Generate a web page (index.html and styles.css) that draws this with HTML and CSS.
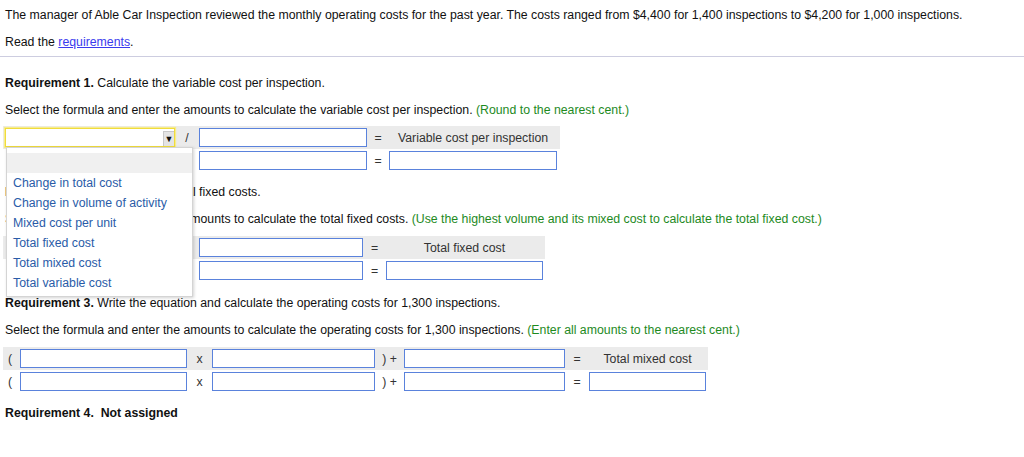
FILE: index.html
```html
<!DOCTYPE html>
<html>
<head>
<meta charset="utf-8">
<link rel="stylesheet" href="styles.css">
</head>
<body>
<div class="page">
  <p class="intro">The manager of Able Car Inspection reviewed the monthly operating costs for the past year. The costs ranged from $4,400 for 1,400 inspections to $4,200 for 1,000 inspections.</p>
  <p class="read">Read the <a class="link" href="#">requirements</a>.</p>
  <hr class="rule">

  <p class="req"><b>Requirement 1.</b> Calculate the variable cost per inspection.</p>
  <p class="instr">Select the formula and enter the amounts to calculate the variable cost per inspection. <span class="hint">(Round to the nearest cent.)</span></p>
  <div class="grid g1">
    <div class="row shaded">
      <div class="cell"><div class="select focus"><span class="arrow">&#9660;</span></div></div>
      <div class="op">/</div>
      <div class="cell"><div class="inp"></div></div>
      <div class="op">=</div>
      <div class="label">Variable cost per inspection</div>
    </div>
    <div class="row">
      <div class="cell"></div>
      <div class="op"></div>
      <div class="cell"><div class="inp"></div></div>
      <div class="op">=</div>
      <div class="cell"><div class="inp"></div></div>
    </div>
  </div>

  <p class="req r2"><b>Requirement 2.</b> Calculate the total fixed costs.</p>
  <p class="instr">Select the formula and enter the amounts to calculate the total fixed costs. <span class="hint">(Use the highest volume and its mixed cost to calculate the total fixed cost.)</span></p>
  <div class="grid g2">
    <div class="row shaded">
      <div class="cell"></div>
      <div class="op"></div>
      <div class="cell"><div class="inp"></div></div>
      <div class="op">=</div>
      <div class="label">Total fixed cost</div>
    </div>
    <div class="row">
      <div class="cell"></div>
      <div class="op"></div>
      <div class="cell"><div class="inp"></div></div>
      <div class="op">=</div>
      <div class="cell"><div class="inp"></div></div>
    </div>
  </div>

  <p class="req r3"><b>Requirement 3.</b> Write the equation and calculate the operating costs for 1,300 inspections.</p>
  <p class="instr">Select the formula and enter the amounts to calculate the operating costs for 1,300 inspections. <span class="hint">(Enter all amounts to the nearest cent.)</span></p>
  <div class="grid g3">
    <div class="row shaded">
      <div class="paren">(</div>
      <div class="cell"><div class="inp"></div></div>
      <div class="op">x</div>
      <div class="cell"><div class="inp"></div></div>
      <div class="op">) +</div>
      <div class="cell"><div class="inp"></div></div>
      <div class="op">=</div>
      <div class="label">Total mixed cost</div>
    </div>
    <div class="row">
      <div class="paren">(</div>
      <div class="cell"><div class="inp"></div></div>
      <div class="op">x</div>
      <div class="cell"><div class="inp"></div></div>
      <div class="op">) +</div>
      <div class="cell"><div class="inp"></div></div>
      <div class="op">=</div>
      <div class="cell"><div class="inp"></div></div>
    </div>
  </div>

  <p class="req r4"><b>Requirement 4.&nbsp; Not assigned</b></p>

  <ul class="dropdown">
    <li class="blank"></li>
    <li>Change in total cost</li>
    <li>Change in volume of activity</li>
    <li>Mixed cost per unit</li>
    <li>Total fixed cost</li>
    <li>Total mixed cost</li>
    <li>Total variable cost</li>
  </ul>
</div>
</body>
</html>
```

FILE: styles.css
```css
html, body {
  margin: 0;
  padding: 0;
  background: #fff;
}
body {
  font-family: "Liberation Sans", Arial, Helvetica, sans-serif;
  font-size: 12.3px;
  color: #111;
}
.page {
  position: relative;
  width: 1024px;
  height: 457px;
  overflow: hidden;
  padding-top: 6px;
  box-sizing: border-box;
}
p {
  margin: 0;
  padding-left: 5px;
  line-height: 18px;
  height: 16px;
  white-space: nowrap;
}
.read { margin-top: 11px; }
.link { color: #3a3aee; text-decoration: underline; }
.rule {
  margin: 7px 0 0 0;
  border: 0;
  border-top: 1px solid #cdcde0;
  height: 0;
}
.req { margin-top: 17px; }
.r2 { margin-top: 11px; }
.r3 { margin-top: 12px; }
.r4 { margin-top: 11px; }
.instr { margin-top: 11px; }
.hint { color: #1e8a1e; }

.grid {
  margin-top: 9px;
  margin-left: 3px;
  display: flex;
  flex-direction: column;
}
.row {
  display: grid;
  height: 23px;
  align-items: center;
  padding: 0 2px;
}
.shaded { background: #ebebeb; }
.g1 .row { grid-template-columns: 170px 24px 168px 22px 168px; width: 552px; padding-right: 3px; }
.g2 { margin-top: 10px; }
.g2 .row { grid-template-columns: 170px 24px 164px 23px 157px; width: 538px; }
.g3 .row { grid-template-columns: 15px 167px 25px 163px 29px 161px 24px 117px; width: 701px; padding-left: 2px; }
.g3 { margin-top: 10px; }

.cell { height: 19px; }
.inp {
  height: 19px;
  box-sizing: border-box;
  border: 1px solid #5a82dc;
  background: #fff;
}
.op, .paren {
  text-align: center;
  color: #333;
  line-height: 18px;
}
.paren { text-align: left; padding-left: 3px; }
.label {
  text-align: center;
  color: #333;
  line-height: 20px;
}
.select {
  position: relative;
  height: 19px;
  box-sizing: border-box;
  border: 1px solid #bbb;
  background: #fff;
}
.select.focus {
  border: 1px solid #f0dc3c;
  box-shadow: 0 0 1px 1px #f7ec8c;
}
.arrow {
  position: absolute;
  right: 0;
  top: 2px;
  width: 11px;
  height: 15px;
  box-sizing: border-box;
  background: #e4e4e4;
  border: 1px solid #c8c8c8;
  border-right: 0;
  border-bottom: 0;
  font-size: 9px;
  line-height: 14px;
  text-align: center;
  color: #111;
}
.dropdown {
  position: absolute;
  left: 6px;
  top: 147px;
  width: 187px;
  height: 150px;
  box-sizing: border-box;
  margin: 0;
  padding: 5px 0 4px 0;
  list-style: none;
  background: #fff;
  border: 1px solid #d4d4d4;
  box-shadow: 1px 1px 3px rgba(0,0,0,0.18);
}
.dropdown li {
  height: 20px;
  line-height: 20px;
  padding-left: 6px;
  color: #2a5ca8;
  white-space: nowrap;
}
.dropdown li.blank { background: #f0f0f0; }
```
